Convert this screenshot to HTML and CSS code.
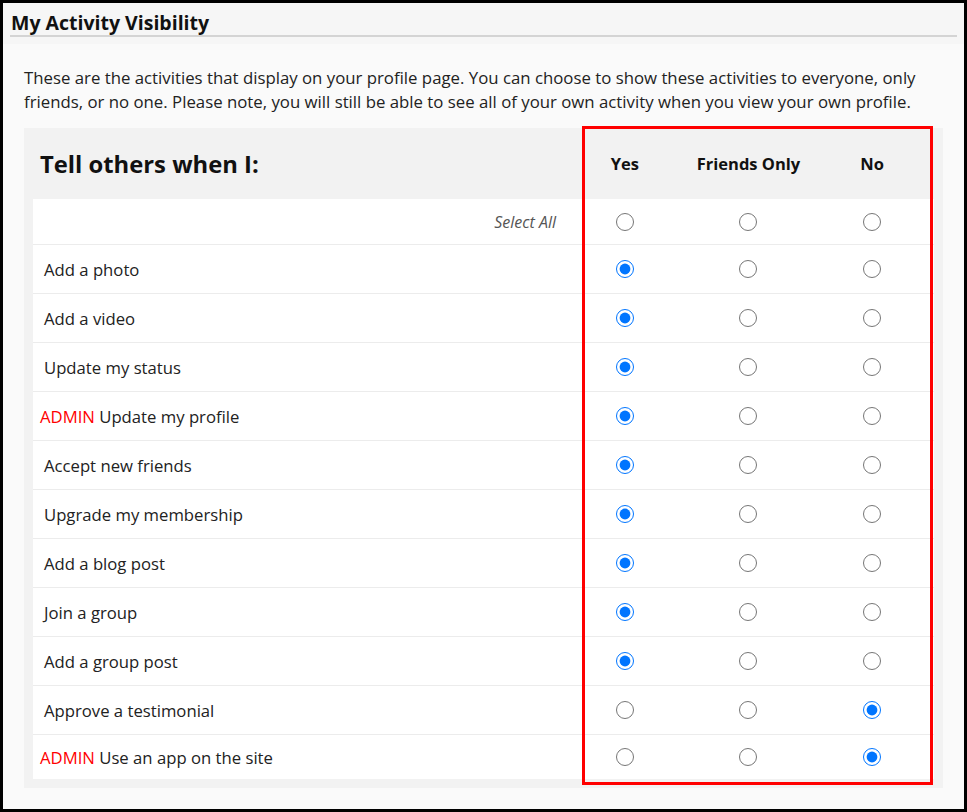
FILE: index.html
```html
<!DOCTYPE html>
<html lang="en">
<head>
<meta charset="utf-8">
<title>My Activity Visibility</title>
<link rel="stylesheet" href="styles.css">
</head>
<body>
<div class="frame">
  <header class="page-head">
    <h1 class="page-title">My Activity Visibility</h1>
  </header>
  <p class="intro">These are the activities that display on your profile page. You can choose to show these activities to everyone, only friends, or no one. Please note, you will still be able to see all of your own activity when you view your own profile.</p>

  <div class="panel">
    <div class="row head-row">
      <div class="head-label">Tell others when I:</div>
      <div class="col col-head">Yes</div>
      <div class="col col-head">Friends Only</div>
      <div class="col col-head">No</div>
    </div>
    <div class="row body-row select-row">
      <div class="select-label">Select All</div>
      <div class="col"><input type="radio" name="all"></div>
      <div class="col"><input type="radio" name="all"></div>
      <div class="col"><input type="radio" name="all"></div>
    </div>
    <div class="row body-row">
      <div class="label">Add a photo</div>
      <div class="col"><input type="radio" name="r1" checked></div>
      <div class="col"><input type="radio" name="r1"></div>
      <div class="col"><input type="radio" name="r1"></div>
    </div>
    <div class="row body-row">
      <div class="label">Add a video</div>
      <div class="col"><input type="radio" name="r2" checked></div>
      <div class="col"><input type="radio" name="r2"></div>
      <div class="col"><input type="radio" name="r2"></div>
    </div>
    <div class="row body-row">
      <div class="label">Update my status</div>
      <div class="col"><input type="radio" name="r3" checked></div>
      <div class="col"><input type="radio" name="r3"></div>
      <div class="col"><input type="radio" name="r3"></div>
    </div>
    <div class="row body-row">
      <div class="label admin-label"><span class="admin">ADMIN</span> Update my profile</div>
      <div class="col"><input type="radio" name="r4" checked></div>
      <div class="col"><input type="radio" name="r4"></div>
      <div class="col"><input type="radio" name="r4"></div>
    </div>
    <div class="row body-row">
      <div class="label">Accept new friends</div>
      <div class="col"><input type="radio" name="r5" checked></div>
      <div class="col"><input type="radio" name="r5"></div>
      <div class="col"><input type="radio" name="r5"></div>
    </div>
    <div class="row body-row">
      <div class="label">Upgrade my membership</div>
      <div class="col"><input type="radio" name="r6" checked></div>
      <div class="col"><input type="radio" name="r6"></div>
      <div class="col"><input type="radio" name="r6"></div>
    </div>
    <div class="row body-row">
      <div class="label">Add a blog post</div>
      <div class="col"><input type="radio" name="r7" checked></div>
      <div class="col"><input type="radio" name="r7"></div>
      <div class="col"><input type="radio" name="r7"></div>
    </div>
    <div class="row body-row">
      <div class="label">Join a group</div>
      <div class="col"><input type="radio" name="r8" checked></div>
      <div class="col"><input type="radio" name="r8"></div>
      <div class="col"><input type="radio" name="r8"></div>
    </div>
    <div class="row body-row">
      <div class="label">Add a group post</div>
      <div class="col"><input type="radio" name="r9" checked></div>
      <div class="col"><input type="radio" name="r9"></div>
      <div class="col"><input type="radio" name="r9"></div>
    </div>
    <div class="row body-row">
      <div class="label">Approve a testimonial</div>
      <div class="col"><input type="radio" name="r10"></div>
      <div class="col"><input type="radio" name="r10"></div>
      <div class="col"><input type="radio" name="r10" checked></div>
    </div>
    <div class="row body-row last-row">
      <div class="label admin-label"><span class="admin">ADMIN</span> Use an app on the site</div>
      <div class="col"><input type="radio" name="r11"></div>
      <div class="col"><input type="radio" name="r11"></div>
      <div class="col"><input type="radio" name="r11" checked></div>
    </div>
  </div>

  <div class="highlight"></div>
</div>
</body>
</html>
```

FILE: styles.css
```css
* {
  box-sizing: border-box;
}

html, body {
  margin: 0;
  padding: 0;
  background: #000;
}

body {
  font-family: "Open Sans", "Noto Sans", sans-serif;
  color: #222;
}

.frame {
  position: relative;
  margin: 3px;
  height: 806px;
  background: #fafafa;
  overflow: hidden;
}

.page-head {
  background: #f6f6f6;
  padding: 8px 7px 7px 7px;
}

.page-title {
  margin: 0;
  padding: 0 0 0 1px;
  font-size: 19.5px;
  line-height: 24px;
  font-weight: 700;
  color: #111;
  border-bottom: 2px solid #d4d4d4;
}

.intro {
  margin: 22px 21px 14px 21px;
  font-size: 16.8px;
  line-height: 24px;
  color: #222;
}

.panel {
  margin: 0 21px 0 21px;
  background: #f2f2f2;
  padding: 0 9px 9px 9px;
}

.row {
  display: grid;
  grid-template-columns: 530px 1fr 1fr 1fr;
  align-items: center;
}

.head-row {
  height: 71px;
}

.head-label {
  padding-left: 7px;
  font-size: 23.8px;
  font-weight: 700;
  color: #111;
}

.col-head {
  font-size: 16.5px;
  font-weight: 700;
  color: #111;
}

.col {
  display: flex;
  justify-content: center;
  align-items: center;
}

.body-row {
  background: #fff;
  height: 49px;
  border-top: 1px solid #ececec;
}

.select-row {
  height: 45px;
  border-top: none;
}

.last-row {
  height: 45px;
}

.label {
  padding-left: 11px;
  font-size: 16.7px;
  color: #222;
}

.admin-label {
  padding-left: 7px;
}

.admin {
  color: #ff0000;
}

.select-label {
  text-align: right;
  padding-right: 7px;
  font-style: italic;
  font-size: 16px;
  color: #555;
}

input[type="radio"] {
  width: 18px;
  height: 18px;
  margin: 0;
}

.highlight {
  position: absolute;
  left: 579px;
  top: 123px;
  width: 351px;
  height: 659px;
  border: 3px solid #ff0000;
  pointer-events: none;
}
```
